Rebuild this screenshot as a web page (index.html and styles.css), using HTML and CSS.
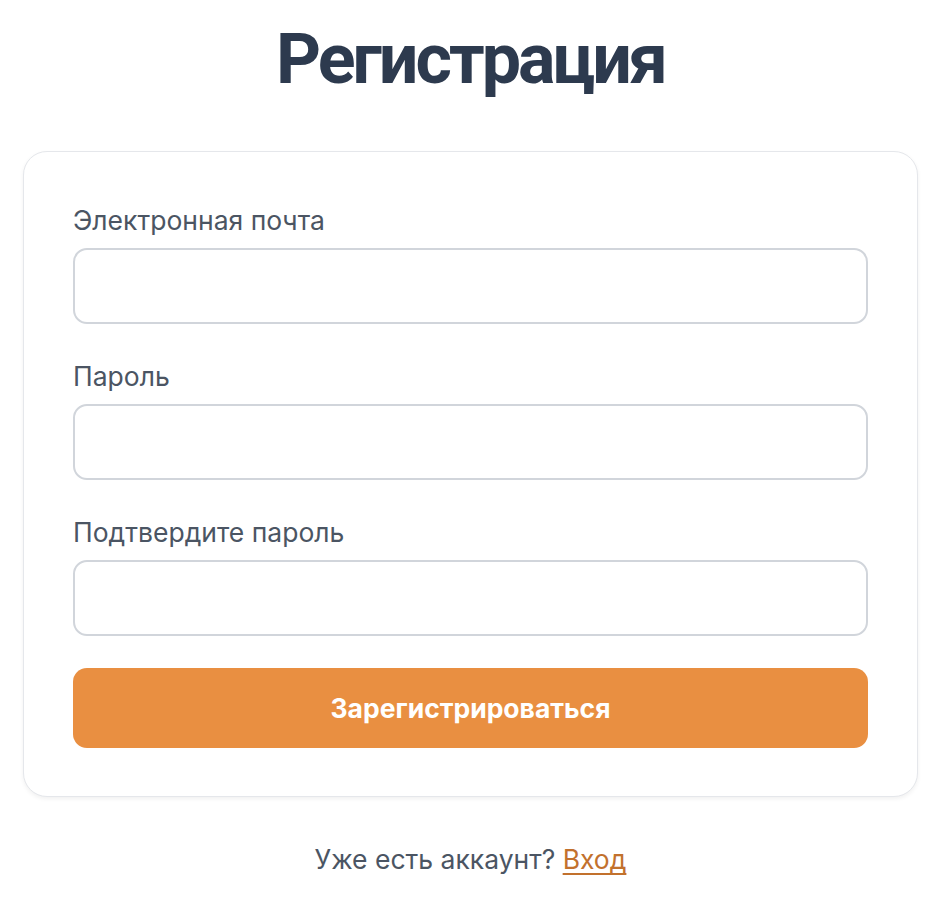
FILE: index.html
```html
<!DOCTYPE html>
<html lang="ru">
<head>
<meta charset="utf-8">
<title>Регистрация</title>
<link rel="stylesheet" href="styles.css">
</head>
<body>
<main class="page">
  <h1 class="title">Регистрация</h1>
  <form class="card">
    <div class="field">
      <label class="label" for="email">Электронная почта</label>
      <input class="input" id="email" type="email">
    </div>
    <div class="field">
      <label class="label" for="pass">Пароль</label>
      <input class="input" id="pass" type="password">
    </div>
    <div class="field">
      <label class="label" for="pass2">Подтвердите пароль</label>
      <input class="input" id="pass2" type="password">
    </div>
    <button class="submit" type="button">Зарегистрироваться</button>
  </form>
  <p class="footer">Уже есть аккаунт? <a class="link" href="#">Вход</a></p>
</main>
</body>
</html>
```
FILE: styles.css
```css
* { box-sizing: border-box; }
html, body { margin: 0; background: #ffffff; }
body {
  font-family: Inter, "Noto Sans", "Liberation Sans", sans-serif;
  color: #4b5563;
}
.page {
  padding: 16px 28px 0 23px;
  display: flex;
  flex-direction: column;
  align-items: stretch;
}
.title {
  margin: 0 0 49px;
  text-align: center;
  font-family: Roboto, Inter, "Liberation Sans", sans-serif;
  font-size: 70px;
  line-height: 86px;
  font-weight: 700;
  letter-spacing: -3px;
  color: #2d3a4e;
}
.card {
  border: 1px solid #e5e7eb;
  border-radius: 24px;
  box-shadow: 0 2px 4px rgba(0, 0, 0, 0.06);
  padding: 48px 49px 48px 49px;
  display: flex;
  flex-direction: column;
  gap: 32px;
  background: #fff;
}
.field {
  display: flex;
  flex-direction: column;
  gap: 10px;
}
.label {
  padding-top: 2px;
  font-size: 26.5px;
  line-height: 36px;
  color: #4b5563;
}
.input {
  height: 76px;
  border: 2px solid #d1d5db;
  border-radius: 14px;
  background: #fff;
  font: inherit;
  font-size: 24px;
  padding: 0 20px;
  outline: none;
}
.submit {
  height: 80px;
  border: none;
  border-radius: 14px;
  background: #e98f41;
  color: #fff;
  font: inherit;
  font-size: 26.5px;
  font-weight: 700;
}
.footer {
  margin: 44px 0 0;
  text-align: center;
  font-size: 26.5px;
  line-height: 36px;
  color: #4b5563;
}
.link {
  color: #c2712d;
  text-decoration: underline;
  text-underline-offset: 4px;
}
```
